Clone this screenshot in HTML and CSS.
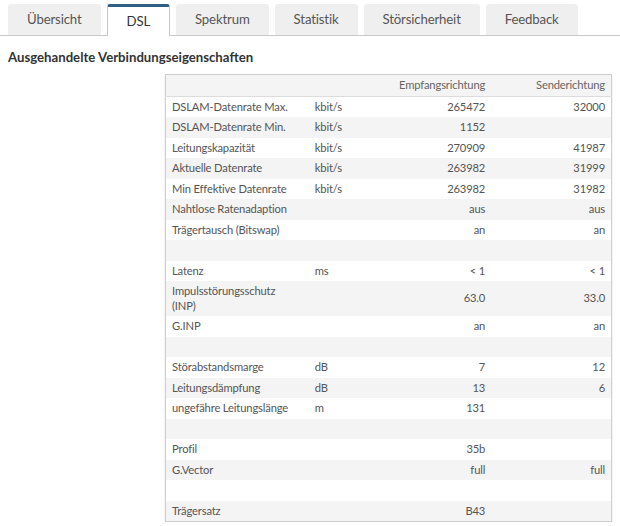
FILE: index.html
```html
<!DOCTYPE html>
<html lang="de">
<head>
<meta charset="utf-8">
<link rel="stylesheet" href="styles.css">
</head>
<body>
<nav class="tabs">
  <div class="tab">Übersicht</div>
  <div class="tab active">DSL</div>
  <div class="tab">Spektrum</div>
  <div class="tab">Statistik</div>
  <div class="tab">Störsicherheit</div>
  <div class="tab">Feedback</div>
</nav>
<h2 class="title">Ausgehandelte Verbindungseigenschaften</h2>
<div class="table-wrap">
<table class="props">
  <colgroup>
    <col class="c-label"><col class="c-unit"><col class="c-rx"><col class="c-tx">
  </colgroup>
  <thead>
    <tr><th></th><th></th><th class="num">Empfangsrichtung</th><th class="num">Senderichtung</th></tr>
  </thead>
  <tbody>
    <tr><td>DSLAM-Datenrate Max.</td><td>kbit/s</td><td class="num">265472</td><td class="num">32000</td></tr>
    <tr><td>DSLAM-Datenrate Min.</td><td>kbit/s</td><td class="num">1152</td><td class="num"></td></tr>
    <tr><td>Leitungskapazität</td><td>kbit/s</td><td class="num">270909</td><td class="num">41987</td></tr>
    <tr><td>Aktuelle Datenrate</td><td>kbit/s</td><td class="num">263982</td><td class="num">31999</td></tr>
    <tr><td>Min Effektive Datenrate</td><td>kbit/s</td><td class="num">263982</td><td class="num">31982</td></tr>
    <tr><td>Nahtlose Ratenadaption</td><td></td><td class="num">aus</td><td class="num">aus</td></tr>
    <tr><td>Trägertausch (Bitswap)</td><td></td><td class="num">an</td><td class="num">an</td></tr>
    <tr class="empty"><td></td><td></td><td></td><td></td></tr>
    <tr><td>Latenz</td><td>ms</td><td class="num">&lt; 1</td><td class="num">&lt; 1</td></tr>
    <tr><td>Impulsstörungsschutz<br>(INP)</td><td></td><td class="num">63.0</td><td class="num">33.0</td></tr>
    <tr><td>G.INP</td><td></td><td class="num">an</td><td class="num">an</td></tr>
    <tr class="empty"><td></td><td></td><td></td><td></td></tr>
    <tr><td>Störabstandsmarge</td><td>dB</td><td class="num">7</td><td class="num">12</td></tr>
    <tr><td>Leitungsdämpfung</td><td>dB</td><td class="num">13</td><td class="num">6</td></tr>
    <tr><td>ungefähre Leitungslänge</td><td>m</td><td class="num">131</td><td class="num"></td></tr>
    <tr class="empty"><td></td><td></td><td></td><td></td></tr>
    <tr><td>Profil</td><td></td><td class="num">35b</td><td class="num"></td></tr>
    <tr><td>G.Vector</td><td></td><td class="num">full</td><td class="num">full</td></tr>
    <tr class="empty"><td></td><td></td><td></td><td></td></tr>
    <tr><td>Trägersatz</td><td></td><td class="num">B43</td><td class="num"></td></tr>
  </tbody>
</table>
</div>
</body>
</html>
```
FILE: styles.css
```css
html, body {
  margin: 0;
  padding: 0;
  background: #ffffff;
}
body {
  font-family: "Lato", "Liberation Sans", sans-serif;
  color: #444;
}
.tabs {
  display: flex;
  gap: 6px;
  padding: 4px 0 0 8px;
  border-bottom: 1px solid #c8c8c8;
  height: 31px;
}
.tab {
  box-sizing: border-box;
  height: 31px;
  padding: 0 19px;
  background: #efefef;
  color: #555;
  font-size: 13.2px;
  letter-spacing: -0.15px;
  line-height: 31px;
  border-radius: 3px 3px 0 0;
  text-align: center;
}
.tab.active {
  background: #fff;
  border: 1px solid #c8c8c8;
  border-top: 3px solid #2f5f85;
  border-bottom: none;
  height: 32px;
  line-height: 28px;
  padding: 0 19px;
  color: #333;
}
.title {
  margin: 12px 0 0 8px;
  font-size: 13.2px;
  font-weight: bold;
  color: #333;
  line-height: 18px;
}
.table-wrap {
  display: flex;
  padding: 8px 0 0 165px;
}
.props {
  border-collapse: collapse;
  border: 1px solid #cfcfcf;
  box-shadow: 0 1px 2px rgba(0,0,0,0.12);
  width: 447px;
  table-layout: fixed;
  font-size: 11.2px;
  letter-spacing: -0.15px;
  color: #555;
}
.c-label { width: 143px; }
.c-unit { width: 80px; }
.c-rx { width: 102px; }
.c-tx { width: 120px; }
.props th, .props td {
  padding: 3px 6px;
  line-height: 14.5px;
  font-weight: normal;
  text-align: left;
  vertical-align: middle;
}
.props thead tr {
  background: #f4f4f4;
  border-bottom: 1px solid #dcdcdc;
}
.props th {
  color: #666;
}
.props .num {
  text-align: right;
}
.props tbody tr:nth-child(even) {
  background: #f4f4f4;
}
.props tr.empty td {
  height: 14.5px;
}
```
